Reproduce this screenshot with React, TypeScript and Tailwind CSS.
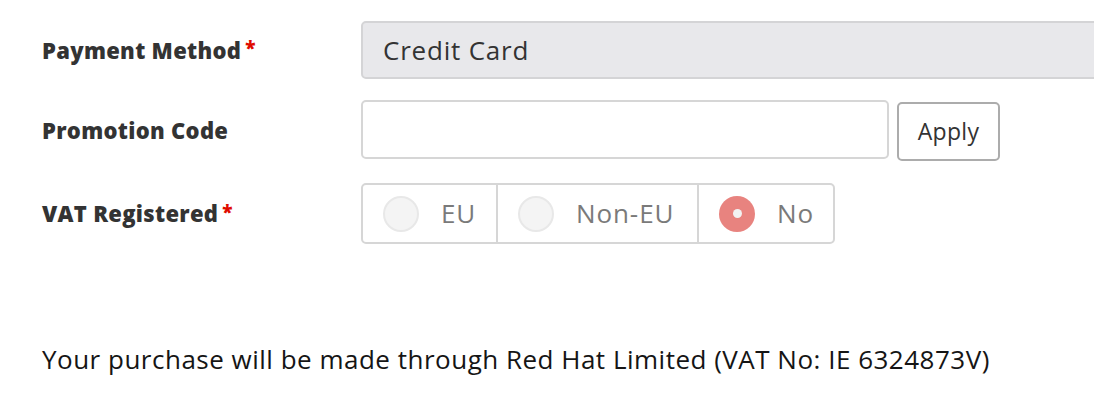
import React from "react";

/* ─── Form label ─────────────────────────────────────────────── */
function Label({ text, required }: { text: string; required?: boolean }) {
  return (
    <div className="w-[319px] shrink-0 flex items-center text-[22px] tracking-[0.3px] font-extrabold text-[#333333]">
      <span>{text}</span>
      {required && <span className="ml-[4px] text-[#e00b00] text-[19px] leading-none -mt-[3px]">*</span>}
    </div>
  );
}

/* ─── Radio segment ──────────────────────────────────────────── */
function Segment({ label, width, checked, last }: { label: string; width: string; checked?: boolean; last?: boolean }) {
  return (
    <div className={"flex items-center gap-[22px] pl-[20px] h-full " + width + (last ? "" : " border-r-2 border-[#d6d6d6]")}>
      {checked ? (
        <span className="w-[36px] h-[36px] rounded-full bg-[#e8837f] flex items-center justify-center">
          <span className="w-[9px] h-[9px] rounded-full bg-[#f2f2f2]" />
        </span>
      ) : (
        <span className="w-[36px] h-[36px] rounded-full bg-[#f4f4f4] border-2 border-[#e8e8e8]" />
      )}
      <span className="text-[26px] tracking-[0.9px] text-[#7a7a7a]">{label}</span>
    </div>
  );
}

export default function App() {
  return (
    <div className="w-[1094px] h-[418px] overflow-hidden bg-white pl-[42px] pt-[21px] font-['Open_Sans',sans-serif] text-[#151515]">
      {/* Payment method */}
      <div className="flex h-[58px]">
        <Label text="Payment Method" required />
        <div className="w-[760px] shrink-0 h-full rounded-[5px] bg-[#e8e8eb] border-2 border-[#d4d4d6] flex items-center pl-[20px] text-[26px] tracking-[0.8px] text-[#333333]">
          Credit Card
        </div>
      </div>

      {/* Promotion code */}
      <div className="flex h-[61px] mt-[21px]">
        <Label text="Promotion Code" />
        <div className="w-[528px] h-[59px] rounded-[5px] border-2 border-[#d6d6d6] bg-white" />
        <button className="ml-[8px] mt-[2px] w-[103px] h-[59px] rounded-[5px] border-2 border-[#acacac] bg-white text-[23px] tracking-[0.3px] text-[#333333]">
          Apply
        </button>
      </div>

      {/* VAT registered */}
      <div className="flex h-[61px] mt-[22px]">
        <Label text="VAT Registered" required />
        <div className="flex h-full rounded-[5px] border-2 border-[#d6d6d6]">
          <Segment label="EU" width="w-[135px]" />
          <Segment label="Non-EU" width="w-[201px]" />
          <Segment label="No" width="w-[134px]" checked last />
        </div>
      </div>

      <p className="mt-[100px] text-[26px] leading-[30px] tracking-[0.5px] text-[#151515]">
        Your purchase will be made through Red Hat Limited (VAT No: IE 6324873V)
      </p>
    </div>
  );
}
